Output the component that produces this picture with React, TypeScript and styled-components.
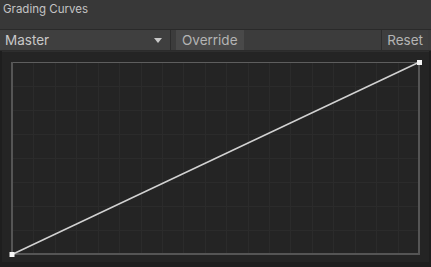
import React from 'react';
import styled, { createGlobalStyle } from 'styled-components';

const GlobalStyle = createGlobalStyle`
  html, body {
    margin: 0;
    padding: 0;
    background: #1e1e1e;
  }
  * {
    box-sizing: border-box;
  }
`;

const Frame = styled.div`
  width: 431px;
  height: 267px;
  display: flex;
  flex-direction: column;
  font-family: Inter, "Noto Sans", sans-serif;
  background: #1e1e1e;
  overflow: hidden;
`;

const Header = styled.div`
  height: 30px;
  padding: 2px 0 0 3px;
  background: #383838;
  color: #c4c4c4;
  font-size: 11.5px;
  border-bottom: 1px solid #2a2a2a;
`;

const Toolbar = styled.div`
  display: flex;
  height: 21px;
  background: #3c3c3c;
  border-bottom: 1px solid #2b2b2b;
  padding-right: 3px;
`;

const Dropdown = styled.div`
  width: 171px;
  display: flex;
  align-items: center;
  justify-content: space-between;
  padding: 0 8px 0 5px;
  background: #3f3f3f;
  border-right: 1px solid #2c2c2c;
  color: #c8c8c8;
  font-size: 13.5px;
`;

const Caret = styled.span`
  width: 0;
  height: 0;
  border-left: 4px solid transparent;
  border-right: 4px solid transparent;
  border-top: 5px solid #c8c8c8;
`;

const ToolButton = styled.div<{ $active?: boolean }>`
  display: flex;
  align-items: center;
  padding: 0 ${(p) => (p.$active ? '6px' : '5px')};
  margin-left: ${(p) => (p.$active ? '5px' : '0')};
  background: ${(p) => (p.$active ? '#494949' : '#3e3e3e')};
  border-left: ${(p) => (p.$active ? 'none' : '1px solid #2c2c2c')};
  color: #b4b4b4;
  font-size: 13.5px;
`;

const Spacer = styled.div`
  flex: 1;
`;

const Panel = styled.div`
  height: 211px;
  margin: 0 2px;
  background: #242424;
  border-top: 1px solid #2e2e2e;
`;

const cols = 19;
const rows = 8;
const left = 10;
const right = 417;
const top = 10;
const bottom = 202;

const CurveGraph: React.FC = () => {
  const w = right - left;
  const h = bottom - top;
  const grid: React.ReactNode[] = [];
  for (let i = 1; i < cols; i++) {
    const x = Math.round(left + (w * i) / cols) + 0.5;
    grid.push(<line key={'v' + i} x1={x} y1={top} x2={x} y2={bottom} stroke="#2b2b2b" strokeWidth={1} />);
  }
  for (let j = 1; j < rows; j++) {
    const y = Math.round(top + (h * j) / rows) + 0.5;
    grid.push(<line key={'h' + j} x1={left} y1={y} x2={right} y2={y} stroke="#2b2b2b" strokeWidth={1} />);
  }
  return (
    <svg width={427} height={210} style={{ display: 'block' }}>
      {grid}
      <line x1={left} y1={top + 0.5} x2={right} y2={top + 0.5} stroke="#5e5e5e" strokeWidth={1} />
      <line x1={left} y1={top} x2={left} y2={bottom + 1} stroke="#555" strokeWidth={2} />
      <line x1={right} y1={top} x2={right} y2={bottom + 1} stroke="#555" strokeWidth={2} />
      <line x1={left} y1={bottom} x2={right + 1} y2={bottom} stroke="#555" strokeWidth={2} />
      <line x1={left} y1={bottom + 0.5} x2={right - 0.5} y2={top + 0.5} stroke="#d2d2d2" strokeWidth={1.5} />
      <rect x={left - 2.5} y={bottom - 2} width={5} height={5} fill="#f4f4f4" />
      <rect x={right - 2} y={top - 2} width={5} height={5} fill="#f4f4f4" />
    </svg>
  );
};

const App: React.FC = () => (
  <>
    <GlobalStyle />
    <Frame>
      <Header>Grading Curves</Header>
      <Toolbar>
        <Dropdown>
          Master
          <Caret />
        </Dropdown>
        <ToolButton $active>Override</ToolButton>
        <Spacer />
        <ToolButton>Reset</ToolButton>
      </Toolbar>
      <Panel>
        <CurveGraph />
      </Panel>
    </Frame>
  </>
);

export default App;
